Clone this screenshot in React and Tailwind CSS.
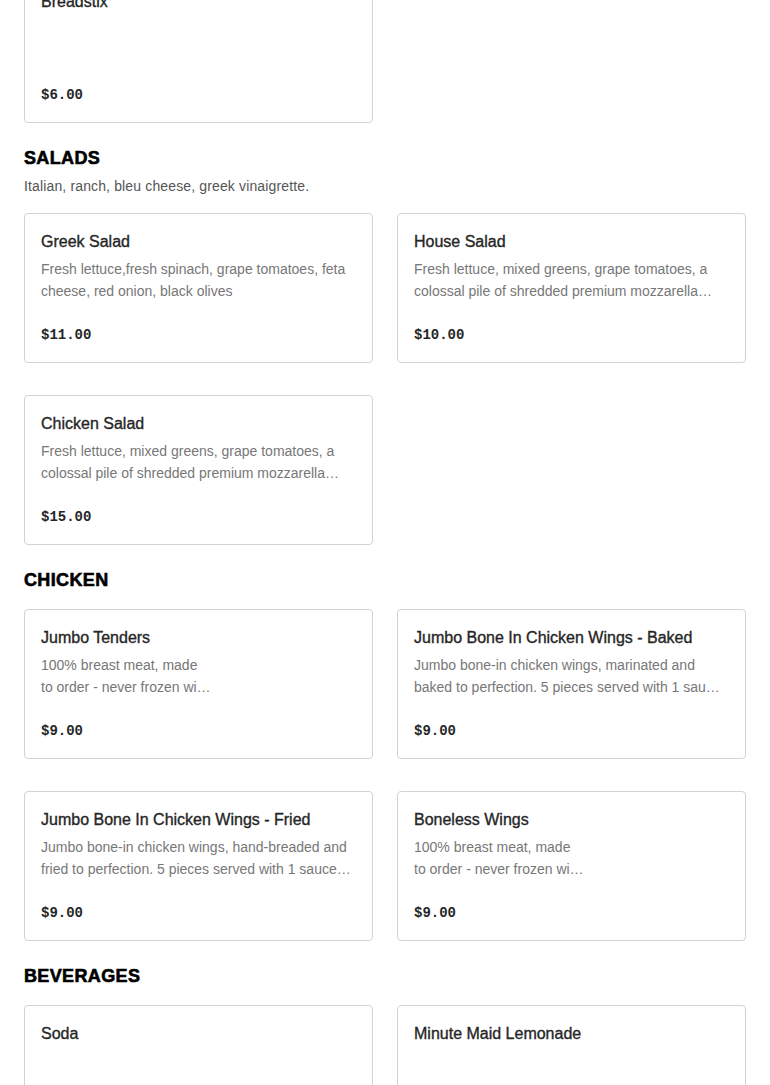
const sections = [
  {
    items: [{ name: 'Breadstix', price: '$6.00' }],
  },
  {
    title: 'SALADS',
    desc: 'Italian, ranch, bleu cheese, greek vinaigrette.',
    items: [
      { name: 'Greek Salad', lines: ['Fresh lettuce,fresh spinach, grape tomatoes, feta', 'cheese, red onion, black olives'], price: '$11.00' },
      { name: 'House Salad', lines: ['Fresh lettuce, mixed greens, grape tomatoes, a', 'colossal pile of shredded premium mozzarella…'], price: '$10.00' },
      { name: 'Chicken Salad', lines: ['Fresh lettuce, mixed greens, grape tomatoes, a', 'colossal pile of shredded premium mozzarella…'], price: '$15.00' },
    ],
  },
  {
    title: 'CHICKEN',
    items: [
      { name: 'Jumbo Tenders', lines: ['100% breast meat, made', 'to order - never frozen wi…'], price: '$9.00' },
      { name: 'Jumbo Bone In Chicken Wings - Baked', lines: ['Jumbo bone-in chicken wings, marinated and', 'baked to perfection. 5 pieces served with 1 sau…'], price: '$9.00' },
      { name: 'Jumbo Bone In Chicken Wings - Fried', lines: ['Jumbo bone-in chicken wings, hand-breaded and', 'fried to perfection. 5 pieces served with 1 sauce…'], price: '$9.00' },
      { name: 'Boneless Wings', lines: ['100% breast meat, made', 'to order - never frozen wi…'], price: '$9.00' },
    ],
  },
  {
    title: 'BEVERAGES',
    items: [
      { name: 'Soda', price: '$2.50' },
      { name: 'Minute Maid Lemonade', price: '$2.50' },
    ],
  },
];

function ItemCard({ item }) {
  return (
    <div className="h-[150px] flex flex-col border border-[#d3d3d3] rounded-[4px] bg-white px-4 pt-4 pb-4">
      <div className="text-[16px] leading-6 text-[#262626] [-webkit-text-stroke:0.35px_#262626]">{item.name}</div>
      {item.lines && (
        <div className="mt-1 text-[14px] leading-[22px] text-[#777]">
          {item.lines.map((l, i) => (
            <div key={i} className="whitespace-nowrap">{l}</div>
          ))}
        </div>
      )}
      <div className="mt-auto text-[14px] leading-[22px] font-bold text-[#262626] font-['Liberation_Mono',monospace]">{item.price}</div>
    </div>
  );
}

export default function App() {
  return (
    <div className="bg-white min-h-screen overflow-hidden px-6 pb-10 font-['Liberation_Sans',Arial,sans-serif]">
      {sections.map((s, i) => (
        <section key={i}>
          {s.title && (
            <h2 className="mt-[23px] text-[18px] leading-6 font-black tracking-[0.02em] text-black [-webkit-text-stroke:0.6px_#000]">{s.title}</h2>
          )}
          {s.desc && <p className="mt-[6px] text-[14px] leading-5 text-[#555] tracking-[0.01em]">{s.desc}</p>}
          <div className={`grid grid-cols-2 gap-x-6 gap-y-8 ${s.title ? 'mt-[17px]' : '-mt-[27px]'}`}>
            {s.items.map((it, j) => (
              <ItemCard key={j} item={it} />
            ))}
          </div>
        </section>
      ))}
    </div>
  );
}
